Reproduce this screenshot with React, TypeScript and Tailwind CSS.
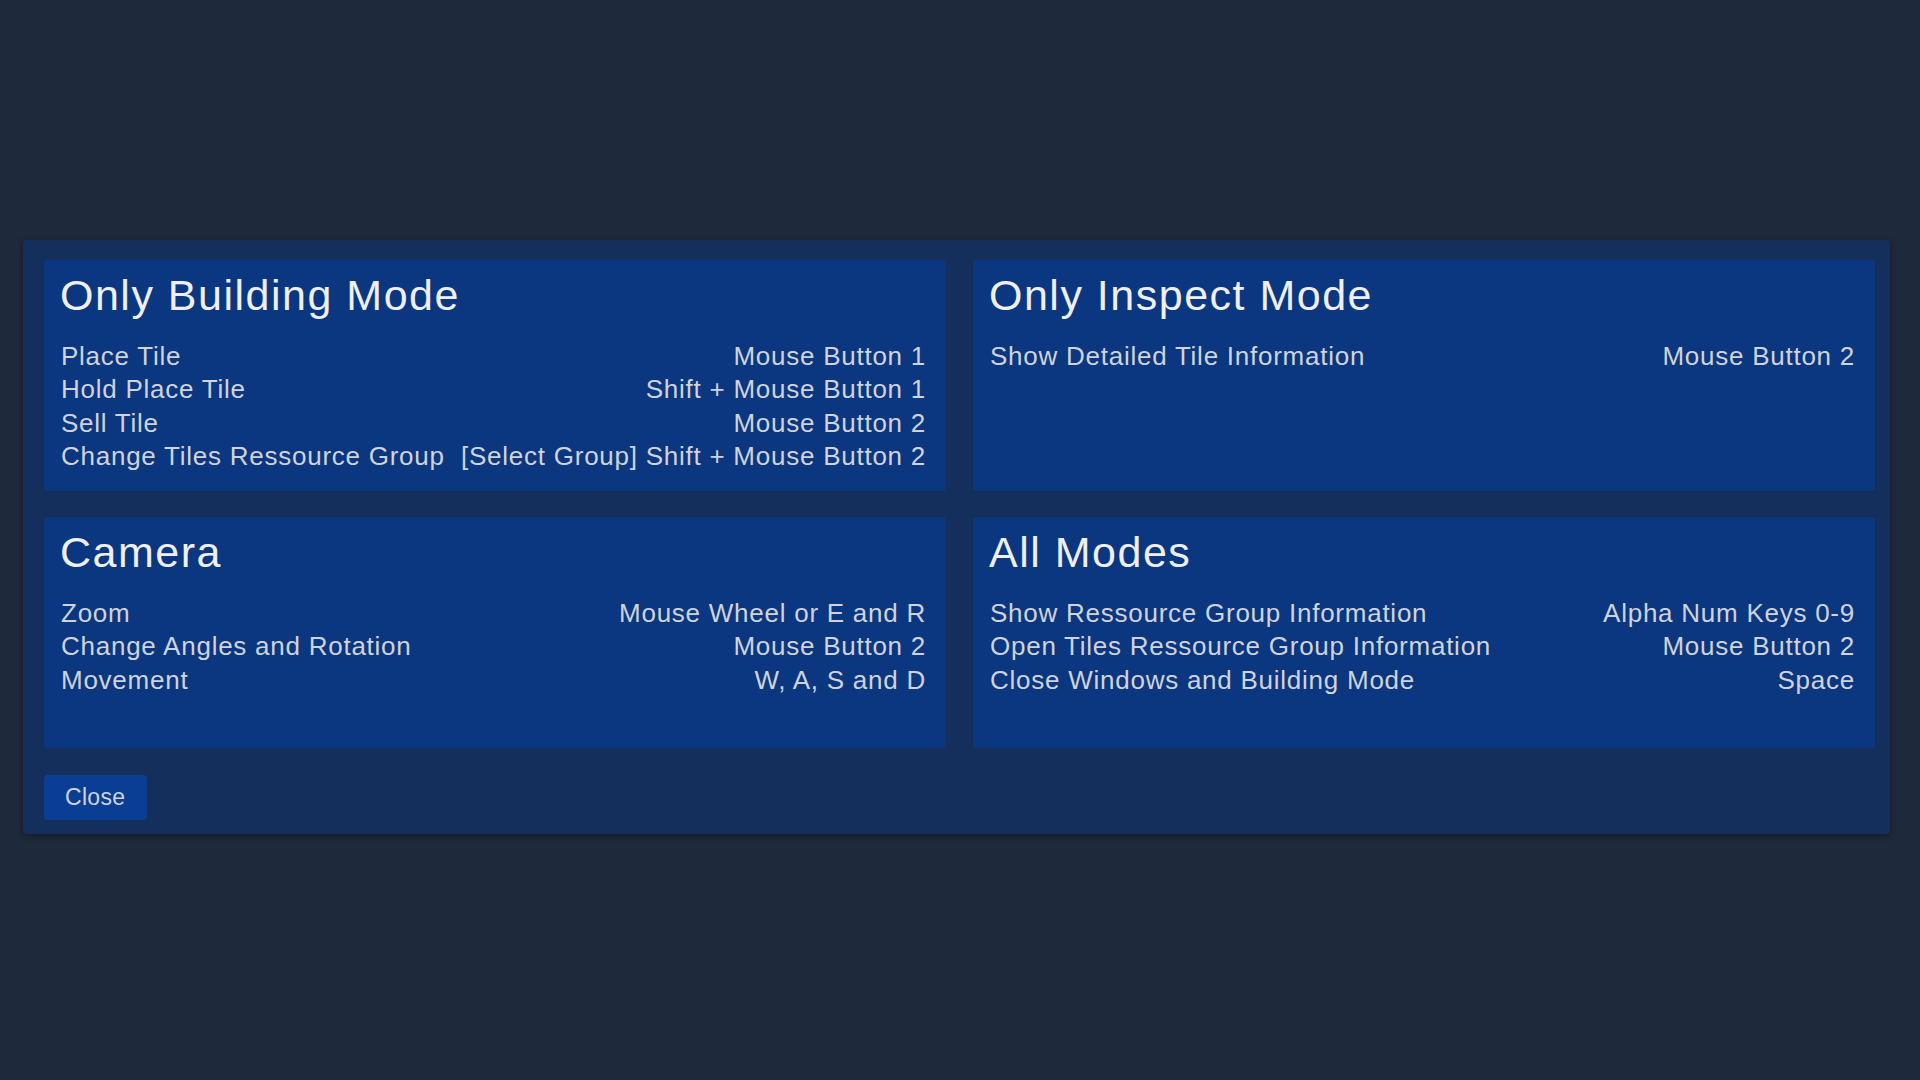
import React from "react";

type Binding = { action: string; keys: string };

const sections: { title: string; rows: Binding[] }[] = [
  {
    title: "Only Building Mode",
    rows: [
      { action: "Place Tile", keys: "Mouse Button 1" },
      { action: "Hold Place Tile", keys: "Shift + Mouse Button 1" },
      { action: "Sell Tile", keys: "Mouse Button 2" },
      { action: "Change Tiles Ressource Group", keys: "[Select Group] Shift + Mouse Button 2" },
    ],
  },
  {
    title: "Only Inspect Mode",
    rows: [{ action: "Show Detailed Tile Information", keys: "Mouse Button 2" }],
  },
  {
    title: "Camera",
    rows: [
      { action: "Zoom", keys: "Mouse Wheel or E and R" },
      { action: "Change Angles and Rotation", keys: "Mouse Button 2" },
      { action: "Movement", keys: "W, A, S and D" },
    ],
  },
  {
    title: "All Modes",
    rows: [
      { action: "Show Ressource Group Information", keys: "Alpha Num Keys 0-9" },
      { action: "Open Tiles Ressource Group Information", keys: "Mouse Button 2" },
      { action: "Close Windows and Building Mode", keys: "Space" },
    ],
  },
];

function Section({ title, rows }: { title: string; rows: Binding[] }) {
  return (
    <div className="h-[231px] rounded-[4px] bg-[#0b3680] pt-[11px] pl-[16px] pr-[20px]">
      <h2 className="text-[43px] leading-[48px] tracking-[1.5px] text-[#efefef]">{title}</h2>
      <ul className="mt-[21px] pl-[1px]">
        {rows.map((r) => (
          <li
            key={r.action}
            className="flex justify-between gap-[10px] text-[26px] leading-[33.3px] tracking-[0.75px] text-[#cfd3da]"
          >
            <span>{r.action}</span>
            <span className="text-right">{r.keys}</span>
          </li>
        ))}
      </ul>
    </div>
  );
}

export default function App() {
  return (
    <div
      className="min-h-screen bg-[#1e293b] pt-[240px] pl-[23px]"
      style={{ fontFamily: '"Liberation Sans", Arial, sans-serif' }}
    >
      <div className="w-[1867px] rounded-[4px] bg-[#142f5c] pt-[20px] pb-[14px] pl-[21px] pr-[15px] shadow-[0_2px_6px_rgba(0,0,0,0.35)]">
        <div className="grid grid-cols-2 gap-x-[27px] gap-y-[26px]">
          {sections.map((s) => (
            <Section key={s.title} title={s.title} rows={s.rows} />
          ))}
        </div>
        <button className="mt-[27px] h-[45px] w-[103px] rounded-[4px] bg-[#0a3d94] pl-[21px] text-left text-[23px] tracking-[0.3px] text-[#cfd3da]">
          Close
        </button>
      </div>
    </div>
  );
}
